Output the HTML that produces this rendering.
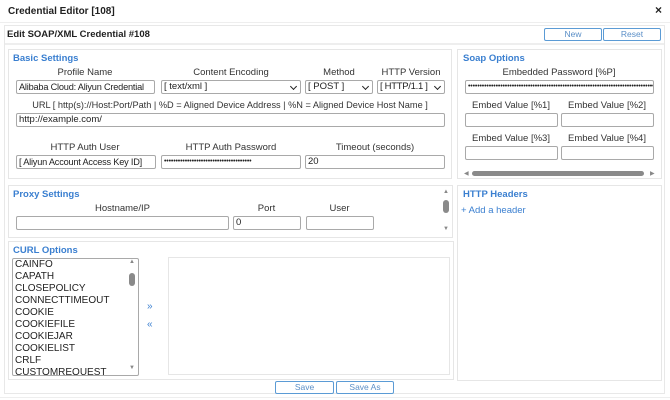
<!DOCTYPE html>
<html><head><meta charset="utf-8"><style>
*{box-sizing:border-box;margin:0;padding:0}
body{width:670px;height:400px;background:#fff;font-family:"Liberation Sans",sans-serif;font-size:9.5px;color:#333;position:relative;overflow:hidden}
.a{position:absolute}
.box{position:absolute;border:1px solid #e6e6e6;background:#fff}
.h{position:absolute;color:#3a7fd0;font-weight:bold;font-size:9.5px}
.lbl{position:absolute;text-align:center;font-size:9.5px;color:#333;white-space:nowrap}
.in{position:absolute;border:1px solid #a9a9a9;border-radius:2px;height:14px;background:#fff;font-size:9.5px;line-height:12px;padding-left:2px;color:#222;white-space:nowrap;overflow:hidden}
.pw{font-size:7px;letter-spacing:-0.15px;line-height:12px}
.sel:after{content:"";position:absolute;right:4px;top:3px;width:4px;height:4px;border-right:1.5px solid #222;border-bottom:1.5px solid #222;transform:rotate(45deg)}
.btn{position:absolute;border:1px solid #5b9bd5;border-radius:2px;height:13px;font-size:8.5px;color:#5b8fc7;text-align:center;line-height:11px;background:#fff}
.li{height:12px;line-height:12px;font-size:10px;color:#222;padding-left:2px}
</style></head><body>
<div class="a" style="left:8px;top:6px;font-weight:bold;font-size:10px;color:#222">Credential Editor [108]</div>
<div class="a" style="left:655px;top:3px;font-weight:bold;font-size:12px;color:#222">×</div>
<div class="a" style="left:0;top:22px;width:670px;height:1px;background:#eee"></div>
<div class="box" style="left:4px;top:25px;width:661px;height:369px;border-color:#e8e8e8"></div>
<div class="a" style="left:5px;top:43px;width:659px;height:2px;background:#eee"></div>
<div class="a" style="left:7px;top:29px;font-weight:bold;font-size:9.5px;color:#222">Edit SOAP/XML Credential #108</div>
<div class="btn" style="left:544px;top:28px;width:58px">New</div>
<div class="btn" style="left:603px;top:28px;width:58px">Reset</div>

<div class="box" style="left:8px;top:49px;width:444px;height:130px"></div>
<div class="h" style="left:13px;top:53px">Basic Settings</div>
<div class="lbl" style="left:16px;top:67px;width:138px">Profile Name</div>
<div class="lbl" style="left:162px;top:67px;width:138px">Content Encoding</div>
<div class="lbl" style="left:306px;top:67px;width:66px">Method</div>
<div class="lbl" style="left:378px;top:67px;width:66px">HTTP Version</div>
<div class="in" style="left:16px;top:80px;width:139px;font-size:9.2px;letter-spacing:-0.2px">Alibaba Cloud: Aliyun Credential</div>
<div class="in sel" style="left:161px;top:80px;width:140px">[ text/xml ]</div>
<div class="in sel" style="left:305px;top:80px;width:68px">[ POST ]</div>
<div class="in sel" style="left:377px;top:80px;width:68px;letter-spacing:-0.3px">[ HTTP/1.1 ]</div>
<div class="lbl" style="left:16px;top:100px;width:428px;font-size:9.2px">URL [ http(s)://Host:Port/Path | %D = Aligned Device Address | %N = Aligned Device Host Name ]</div>
<div class="in" style="left:16px;top:113px;width:429px">http://example.com/</div>
<div class="lbl" style="left:16px;top:142px;width:138px">HTTP Auth User</div>
<div class="lbl" style="left:162px;top:142px;width:138px">HTTP Auth Password</div>
<div class="lbl" style="left:306px;top:142px;width:138px">Timeout (seconds)</div>
<div class="in" style="left:16px;top:155px;width:140px;font-size:9.2px;letter-spacing:-0.2px">[ Aliyun Account Access Key ID]</div>
<div class="in pw" style="left:161px;top:155px;width:140px">••••••••••••••••••••••••••••••••••••••</div>
<div class="in" style="left:305px;top:155px;width:140px">20</div>

<div class="box" style="left:457px;top:49px;width:205px;height:130px"></div>
<div class="h" style="left:463px;top:53px">Soap Options</div>
<div class="lbl" style="left:465px;top:67px;width:188px">Embedded Password [%P]</div>
<div class="in pw" style="left:465px;top:80px;width:189px">••••••••••••••••••••••••••••••••••••••••••••••••••••••••••••••••••••••••••••••••••••••••••••••••</div>
<div class="lbl" style="left:465px;top:100px;width:92px">Embed Value [%1]</div>
<div class="lbl" style="left:561px;top:100px;width:92px">Embed Value [%2]</div>
<div class="in" style="left:465px;top:113px;width:93px"></div>
<div class="in" style="left:561px;top:113px;width:93px"></div>
<div class="lbl" style="left:465px;top:133px;width:92px">Embed Value [%3]</div>
<div class="lbl" style="left:561px;top:133px;width:92px">Embed Value [%4]</div>
<div class="in" style="left:465px;top:146px;width:93px"></div>
<div class="in" style="left:561px;top:146px;width:93px"></div>
<div class="a" style="left:464px;top:170px;font-size:6px;color:#888">◀</div>
<div class="a" style="left:472px;top:171px;width:172px;height:5px;border-radius:3px;background:#8a8a8a"></div>
<div class="a" style="left:650px;top:170px;font-size:6px;color:#888">▶</div>

<div class="box" style="left:8px;top:185px;width:445px;height:53px"></div>
<div class="h" style="left:13px;top:189px">Proxy Settings</div>
<div class="lbl" style="left:16px;top:203px;width:213px">Hostname/IP</div>
<div class="lbl" style="left:233px;top:203px;width:67px">Port</div>
<div class="lbl" style="left:306px;top:203px;width:67px">User</div>
<div class="in" style="left:16px;top:216px;width:213px"></div>
<div class="in" style="left:233px;top:216px;width:68px">0</div>
<div class="in" style="left:306px;top:216px;width:68px"></div>
<div class="a" style="left:443px;top:189px;font-size:6px;color:#888">▲</div>
<div class="a" style="left:443px;top:200px;width:6px;height:13px;border-radius:3px;background:#8a8a8a"></div>
<div class="a" style="left:443px;top:226px;font-size:6px;color:#888">▼</div>

<div class="box" style="left:8px;top:241px;width:446px;height:139px"></div>
<div class="h" style="left:13px;top:245px">CURL Options</div>
<div class="a" style="left:12px;top:258px;width:127px;height:118px;border:1px solid #a9a9a9;border-radius:2px;overflow:hidden">
<div class="li">CAINFO</div><div class="li">CAPATH</div><div class="li">CLOSEPOLICY</div><div class="li">CONNECTTIMEOUT</div><div class="li">COOKIE</div><div class="li">COOKIEFILE</div><div class="li">COOKIEJAR</div><div class="li">COOKIELIST</div><div class="li">CRLF</div><div class="li">CUSTOMREQUEST</div>
<div class="a" style="left:116px;top:0;font-size:6px;color:#888">▲</div>
<div class="a" style="left:116px;top:14px;width:6px;height:13px;border-radius:3px;background:#8a8a8a"></div>
<div class="a" style="left:116px;top:106px;font-size:6px;color:#888">▼</div>
</div>
<div class="a" style="left:147px;top:301px;color:#3a7fd0;font-size:10px">»</div>
<div class="a" style="left:147px;top:319px;color:#3a7fd0;font-size:10px">«</div>
<div class="a" style="left:168px;top:257px;width:282px;height:118px;border:1px solid #e6e6e6"></div>

<div class="box" style="left:457px;top:185px;width:205px;height:196px"></div>
<div class="h" style="left:463px;top:189px">HTTP Headers</div>
<div class="a" style="left:461px;top:205px;color:#3a7fd0;font-size:9.5px">+ Add a header</div>

<div class="btn" style="left:275px;top:381px;width:59px">Save</div>
<div class="btn" style="left:336px;top:381px;width:58px">Save As</div>
<div class="a" style="left:0;top:397px;width:670px;height:1px;background:#eee"></div>
</body></html>
